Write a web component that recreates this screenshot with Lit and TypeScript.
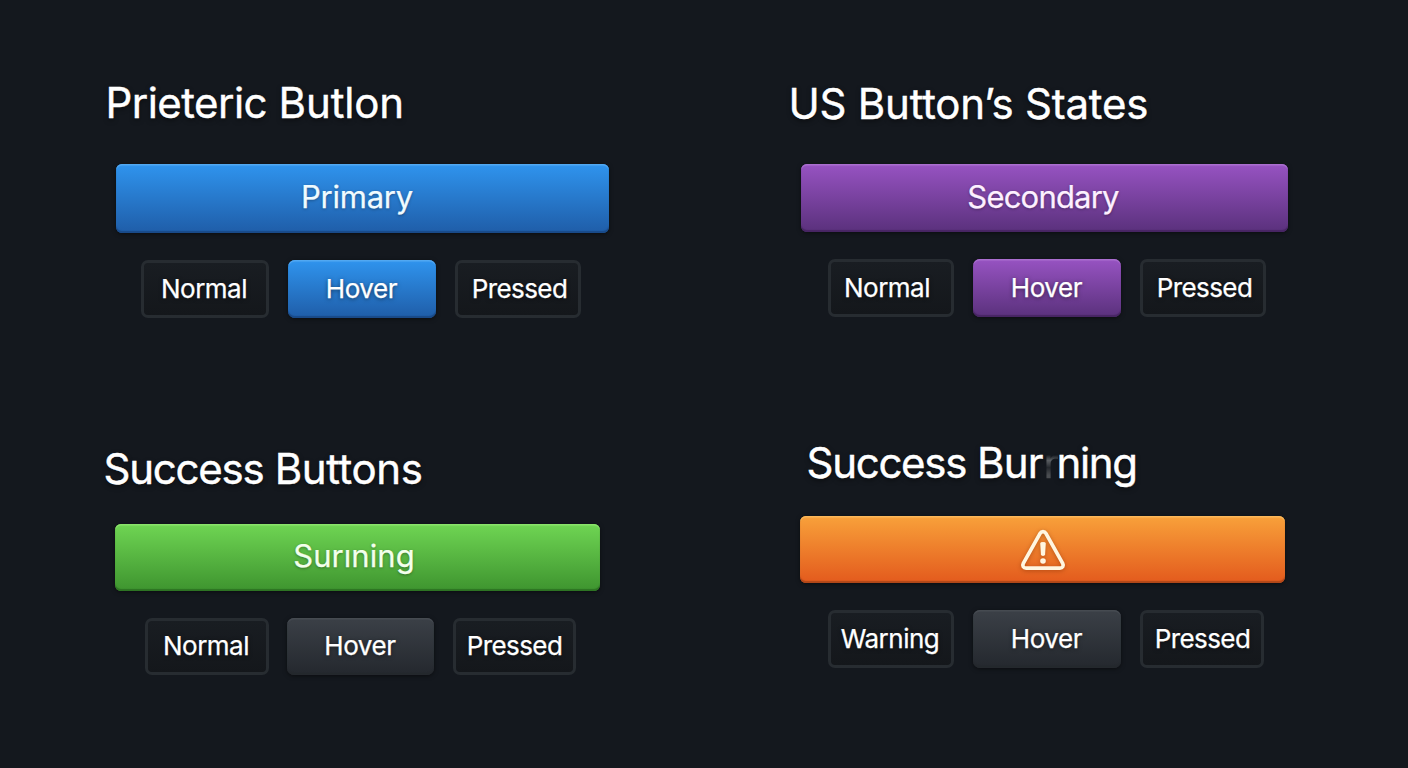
import { LitElement, html, css, svg, TemplateResult } from "lit";
import { customElement } from "lit/decorators.js";

interface Group {
  tone: string;
  title: TemplateResult | string;
  label: TemplateResult | string;
  states: [string, string, string];
}

const warningIcon = html`<svg class="icon" viewBox="0 0 46 42" aria-label="Warning">
  ${svg`<path class="outline" d="M20.1 4.3 L3.3 34.3 C2 36.8 3.4 39.2 6.1 39.2 H39.9 C42.6 39.2 44 36.8 42.7 34.3 L25.9 4.3 C24.6 2 21.4 2 20.1 4.3 Z"/>
  <path class="solid" d="M20.2 14.4 Q20.2 13 23 13 Q25.8 13 25.8 14.4 L25.1 25.6 Q24.9 27 23 27 Q21.1 27 20.9 25.6 Z"/>
  <circle class="solid" cx="23" cy="32" r="2.8"/>`}
</svg>`;

const groups: Group[] = [
  {
    tone: "blue",
    title: html`<span class="lead">Prieteric</span> Butlon`,
    label: "Primary",
    states: ["Normal", "Hover", "Pressed"],
  },
  { tone: "purple", title: "US Button’s States", label: "Secondary", states: ["Normal", "Hover", "Pressed"] },
  {
    tone: "green",
    title: html`<span class="lead">Success</span> Buttons`,
    label: "Surıning",
    states: ["Normal", "Hover", "Pressed"],
  },
  {
    tone: "orange",
    title: html`<span class="lead">Success</span> Bur<span class="faded">r</span><span class="tail">ning</span>`,
    label: warningIcon,
    states: ["Warning", "Hover", "Pressed"],
  },
];

@customElement("app-root")
export class AppRoot extends LitElement {
  static styles = css`
    :host {
      display: block;
      width: 1408px;
      height: 768px;
      overflow: hidden;
      background: #14181e;
      color: #fff;
      font-family: "Inter", sans-serif;
    }
    .board {
      display: grid;
      grid-template-columns: 704px 704px;
      grid-template-rows: 384px 384px;
    }
    .group { box-sizing: border-box; padding-top: var(--top); }
    h2 {
      margin: 0 0 0 var(--title-x);
      font-size: 42px;
      line-height: 52px;
      font-weight: 400;
      letter-spacing: var(--title-ls);
      white-space: nowrap;
      text-shadow: 0 2px 5px rgba(0, 0, 0, 0.5);
      -webkit-text-stroke: 0.4px currentColor;
    }
    .lead { letter-spacing: var(--lead-ls); }
    button {
      box-sizing: border-box;
      display: flex;
      align-items: center;
      justify-content: center;
      margin: 0;
      padding: 0 0 3px;
      border: 0;
      color: inherit;
      font: inherit;
      white-space: nowrap;
      -webkit-text-stroke: 0.25px currentColor;
    }
    .main {
      width: var(--main-w);
      height: var(--main-h);
      margin: var(--main-gap) 0 0 var(--main-x);
      padding-bottom: var(--main-pb, 4px);
      padding-right: var(--main-pr, 0px);
      border-radius: 6px;
      font-size: 31px;
      letter-spacing: var(--main-ls);
      color: var(--ink);
      text-shadow: 0 1px 3px rgba(0, 0, 0, 0.35);
    }
    .main, .hover {
      background: linear-gradient(var(--c1), var(--c2));
      box-shadow: inset 0 2px 1px -0.5px var(--hi), inset 0 -2px 1px var(--lo), 0 1px 4px rgba(0, 0, 0, 0.5);
    }
    .states {
      display: flex;
      gap: 19px;
      margin: var(--row-gap) 0 0 var(--row-x);
    }
    .state {
      height: var(--state-h);
      padding-bottom: var(--state-pb, 1px);
      border-radius: 7px;
      font-size: 26px;
      letter-spacing: -0.5px;
      text-shadow: 0 1px 4px rgba(0, 0, 0, 0.55);
    }
    .normal, .pressed {
      border: 3px solid #272c31;
      background: linear-gradient(#191d22, #14171b);
    }
    .normal { width: var(--normal-w); padding-right: var(--normal-pr, 2px); }
    .hover { width: 148px; letter-spacing: -0.4px; padding-right: 1px; }
    .pressed { width: var(--pressed-w); padding-left: var(--pressed-pl, 0px); letter-spacing: -0.6px; }

    .blue {
      --top: 77px; --title-x: 105.5px; --title-ls: -0.15px; --lead-ls: -0.55px;
      --main-x: 116px; --main-w: 493px; --main-h: 69px; --main-gap: 35px; --main-pr: 11px; --main-pb: 5px; --main-ls: -0.25px;
      --row-x: 141px; --row-gap: 27px; --state-h: 58px; --normal-w: 128px; --pressed-w: 126px; --pressed-pl: 3px;
      --c1: #2f94ee; --c2: #1f5da8; --hi: #54a9f2; --lo: #194a88; --ink: #f0fbff;
    }
    .purple {
      --top: 78px; --title-x: 84.5px; --title-ls: -0.23px;
      --main-x: 97px; --main-w: 487px; --main-h: 68px; --main-gap: 34px; --main-pr: 3px; --main-ls: -0.8px;
      --row-x: 124px; --row-gap: 27px; --state-h: 58px; --normal-w: 126px; --normal-pr: 8px; --pressed-w: 126px; --pressed-pl: 3px;
      --c1: #9753c2; --c2: #5a317c; --hi: #ab70d0; --lo: #472563; --ink: #fdf0ff;
    }
    .green {
      --top: 59px; --title-x: 103.5px; --title-ls: -0.4px; --lead-ls: -1.25px;
      --main-x: 115px; --main-w: 485px; --main-h: 67px; --main-gap: 29px; --main-pr: 7px; --main-ls: 0.05px;
      --row-x: 145px; --row-gap: 27px; --state-h: 57px; --state-pb: 3px; --normal-w: 124px; --pressed-w: 123px;
      --c1: #6fd553; --c2: #3e942f; --hi: #8be46c; --lo: #2d7323; --ink: #f3ffec;
    }
    .orange {
      --top: 53px; --title-x: 102.5px; --title-ls: -0.8px; --lead-ls: -1.3px;
      --main-x: 96px; --main-w: 485px; --main-h: 67px; --main-gap: 27px; --main-pb: 0px; --main-ls: 0;
      --row-x: 124px; --row-gap: 27px; --state-h: 58px; --normal-w: 126px; --pressed-w: 124px; --pressed-pl: 1px;
      --c1: #f8a13a; --c2: #e35a1d; --hi: #fbb95c; --lo: #b04719; --ink: #fff7e2;
    }
    .green .hover, .orange .hover {
      --c1: #3b4047; --c2: #24282e; --hi: #474c53; --lo: #24282d;
    }
    .green .states { gap: 18px; }
    .green .hover { width: 147px; }
    .green .pressed { margin-left: 1px; }
    .faded {
      margin-right: -2px;
      background: linear-gradient(#14181e 35%, #5a5e62 46%, #24282d 60%, #4a4d51 75%);
      -webkit-background-clip: text;
      background-clip: text;
      color: transparent;
      text-shadow: none;
    }
    .tail { letter-spacing: -1.3px; }
    .icon { width: 46px; height: 42px; filter: drop-shadow(0 1px 2px rgba(120, 40, 0, 0.45)); }
    .outline { fill: none; stroke: #fff6e0; stroke-width: 3.7; stroke-linejoin: round; }
    .solid { fill: #fff6e0; }
  `;

  render() {
    return html`<main class="board">
      ${groups.map(
        (g) => html`<section class="group ${g.tone}">
          <h2>${g.title}</h2>
          <button class="main">${g.label}</button>
          <div class="states">
            <button class="state normal">${g.states[0]}</button>
            <button class="state hover">${g.states[1]}</button>
            <button class="state pressed">${g.states[2]}</button>
          </div>
        </section>`
      )}
    </main>`;
  }
}
